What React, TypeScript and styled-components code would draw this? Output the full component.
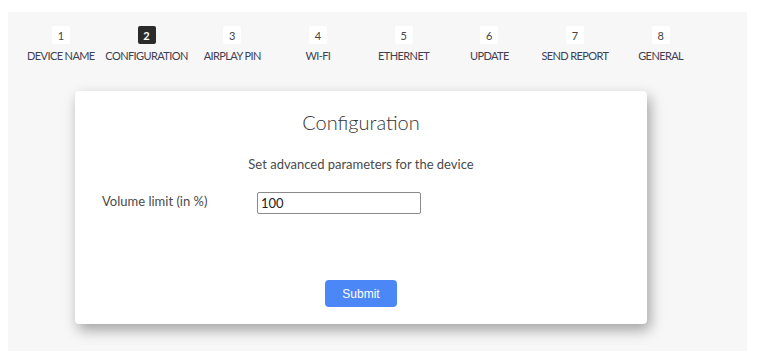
import React, { useState } from "react";
import styled, { createGlobalStyle } from "styled-components";

const GlobalStyle = createGlobalStyle`
    body {
        margin: 0;
        background: #ffffff;
        font-family: "Lato", "Open Sans", sans-serif;
        color: #333;
    }
`;

const Page = styled.div`
    padding: 12px 17px 12px 8px;
`;

const Panel = styled.div`
    background: #f7f7f7;
    height: 339px;
    box-sizing: border-box;
    padding: 14px 0 0 10px;
`;

const Steps = styled.div`
    display: flex;
`;

const Step = styled.div`
    width: 85.7px;
    display: flex;
    flex-direction: column;
    align-items: center;
    gap: 5px;
`;

const StepNum = styled.div<{ $active?: boolean }>`
    width: 18px;
    height: 18px;
    border-radius: 2px;
    display: flex;
    align-items: center;
    justify-content: center;
    font-size: 11px;
    font-weight: ${(p) => (p.$active ? 700 : 400)};
    background: ${(p) => (p.$active ? "#2b2b2b" : "#ffffff")};
    color: ${(p) => (p.$active ? "#ffffff" : "#444")};
`;

const StepLabel = styled.div`
    font-size: 11px;
    letter-spacing: -0.6px;
    color: #3f3f52;
    white-space: nowrap;
`;

const Card = styled.div`
    margin: 29px 0 0 57px;
    width: 572px;
    height: 233px;
    box-sizing: border-box;
    background: #fff;
    border-radius: 4px;
    box-shadow: 3px 6px 14px rgba(0, 0, 0, 0.35);
    padding: 18px 27px 0;
    display: flex;
    flex-direction: column;
`;

const Title = styled.h2`
    margin: 0;
    text-align: center;
    font-size: 20px;
    font-weight: 300;
    color: #333;
    line-height: 26px;
`;

const Subtitle = styled.p`
    margin: 21px 0 0;
    text-align: center;
    font-size: 13px;
    color: #4a4a4a;
    line-height: 16px;
`;

const FieldRow = styled.div`
    margin-top: 20px;
    display: flex;
    align-items: center;
`;

const FieldLabel = styled.label`
    width: 155px;
    font-size: 13px;
    color: #4a4a4a;
    margin-top: -5px;
`;

const TextInput = styled.input`
    width: 164px;
    height: 22px;
    box-sizing: border-box;
    border: 1px solid #8a8a8a;
    border-radius: 2px;
    padding: 0 3px;
    font-family: "Lato", sans-serif;
    font-size: 13px;
    color: #222;
    outline: none;
`;

const Actions = styled.div`
    margin-top: 66px;
    display: flex;
    justify-content: center;
`;

const SubmitButton = styled.button`
    width: 72px;
    height: 27px;
    border: none;
    border-radius: 4px;
    background: #4c87f8;
    color: #fff;
    font-family: "Liberation Sans", Arial, sans-serif;
    font-size: 12px;
    cursor: pointer;
`;

const STEPS = [
    "DEVICE NAME",
    "CONFIGURATION",
    "AIRPLAY PIN",
    "WI-FI",
    "ETHERNET",
    "UPDATE",
    "SEND REPORT",
    "GENERAL",
];

export default function App() {
    const [volume, setVolume] = useState("100");
    const current = 1;

    return (
        <Page>
            <GlobalStyle />
            <Panel>
                <Steps>
                    {STEPS.map((s, i) => (
                        <Step key={s}>
                            <StepNum $active={i === current}>{i + 1}</StepNum>
                            <StepLabel>{s}</StepLabel>
                        </Step>
                    ))}
                </Steps>
                <Card>
                    <Title>Configuration</Title>
                    <Subtitle>Set advanced parameters for the device</Subtitle>
                    <FieldRow>
                        <FieldLabel>Volume limit (in %)</FieldLabel>
                        <TextInput
                            value={volume}
                            onChange={(e) => setVolume(e.target.value)}
                        />
                    </FieldRow>
                    <Actions>
                        <SubmitButton>Submit</SubmitButton>
                    </Actions>
                </Card>
            </Panel>
        </Page>
    );
}
